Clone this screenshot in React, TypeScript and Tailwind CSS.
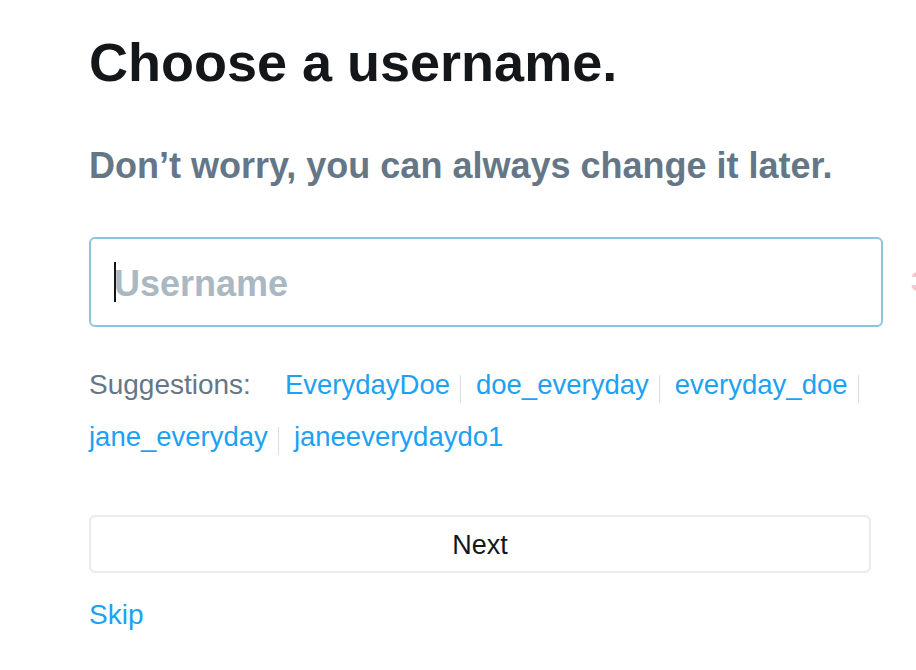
import { useState } from 'react';

const suggestions = ['EverydayDoe', 'doe_everyday', 'everyday_doe', 'jane_everyday', 'janeeverydaydo1'];

export default function App() {
  const [value, setValue] = useState('');

  return (
    <div
      className="h-screen w-full overflow-hidden bg-white"
      style={{ fontFamily: '"Liberation Sans", Arial, sans-serif' }}
    >
      <div className="pl-[89px]">
        <h1 className="mt-[35px] text-[54px] leading-[54px] font-bold text-[#14171a] whitespace-nowrap">
          Choose a username.
        </h1>
        <p className="mt-[59px] text-[36px] leading-[36px] font-bold text-[#657786] whitespace-nowrap">
          Don’t worry, you can always change it later.
        </p>

        {/* username field */}
        <div className="mt-[53px] flex items-center">
          <div className="relative w-[794px] shrink-0">
            <input
              value={value}
              onChange={(e) => setValue(e.target.value)}
              placeholder="Username"
              className="h-[90px] w-full rounded-md border-2 border-[#8ec4dc] pl-[23px] pt-[4px] text-[36px] leading-[36px] font-bold text-[#14171a] caret-transparent outline-none placeholder:text-[#aab8c2]"
            />
            <span className="absolute left-[25px] top-[25px] h-[40px] w-[2px] bg-[#14171a]" />
          </div>
          <span className="ml-[28px] shrink-0 text-[28px] font-bold text-[#f5c6cf]">30</span>
        </div>

        {/* suggestions */}
        <div className="mt-[32px] flex w-[794px] flex-wrap items-center text-[28px] leading-[52px]">
          <span className="mr-[34px] text-[#657786]">Suggestions:</span>
          {suggestions.map((s, i) => (
            <span key={s} className="flex items-center">
              <a href="#" className="text-[27.5px] text-[#1da1f2]">
                {s}
              </a>
              {i < suggestions.length - 1 && (
                <span className="ml-[10px] mr-[15px] mt-[8px] h-[28px] w-px bg-[#d6dfe5]" />
              )}
            </span>
          ))}
        </div>

        <button className="mt-[52px] flex h-[58px] w-[782px] items-center justify-center rounded-md border-2 border-[#e6ecf0] bg-white pt-[2px] text-[27px] text-[#14171a]">
          Next
        </button>

        <a href="#" className="mt-[28px] block w-fit text-[28px] leading-[28px] text-[#1da1f2]">
          Skip
        </a>
      </div>
    </div>
  );
}
